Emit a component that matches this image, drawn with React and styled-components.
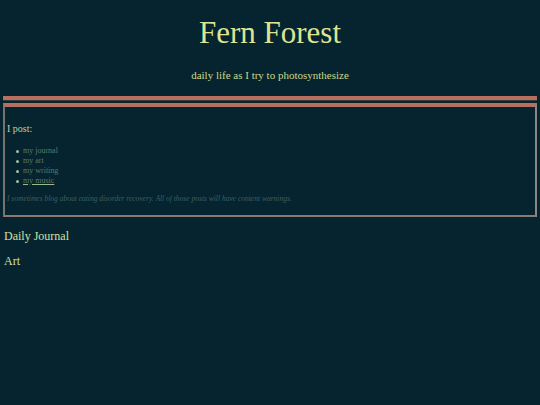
import React from "react";
import styled, { createGlobalStyle } from "styled-components";

const Global = createGlobalStyle`
body {
  margin: 0;
  padding: 0 3px;
  background: #06242f;
  font-family: "Liberation Serif", "DejaVu Serif", serif;
}
`

const Header = styled.header`
text-align: center;
padding-top: 11px;
`
const Title = styled.h1`
margin: 0;
font-size: 31px;
line-height: 44px;
font-weight: normal;
color: #dde592;
`
const Subtitle = styled.p`
margin: 12px 0 0;
font-size: 11px;
line-height: 16px;
color: #cbd98c;
`
const Bar = styled.div`
height: 4px;
margin-top: ${(p) => p.top}px;
background: #b7705f;
border-bottom: 1px solid #3b3a38;
`
const Box = styled.section`
margin-top: 2px;
border-top: 4px solid #b7705f;
border-left: 2px solid #77726d;
border-right: 2px solid #8c8782;
border-bottom: 2px solid #8c7a72;
padding: 15px 2px 9px;
`
const Lead = styled.p`
margin: 0;
font-size: 10px;
line-height: 14px;
color: #bcd3a2;
`
const List = styled.ul`
margin: 10px 0 6px;
padding-left: 9px;
list-style: none;
font-size: 8px;
line-height: 10px;
color: #587c68;
`
const Item = styled.li`
display: flex;
align-items: center;
gap: 4px;
&::before {
  content: "";
  width: 3px;
  height: 3px;
  border-radius: 50%;
  background: #9cc4a0;
}
span {
  text-decoration: ${(p) => (p.under ? "underline" : "none")};
  text-decoration-color: #9bb98e;
}
`
const Note = styled.p`
margin: 0;
font-size: 7.5px;
line-height: 14px;
font-style: italic;
color: #3c5f5f;
`
const Section = styled.h2`
margin: ${(p) => p.top}px 0 0 1px;
font-size: 12px;
line-height: 18px;
font-weight: normal;
color: #cfe0a4;
`

export default function App() {
  return (
    <>
      <Global />
      <Header>
        <Title>Fern Forest</Title>
        <Subtitle>daily life as I try to photosynthesize</Subtitle>
      </Header>
      <Bar top={13} />
      <Box>
        <Lead>I post:</Lead>
        <List>
          <Item><span>my journal</span></Item>
          <Item><span>my art</span></Item>
          <Item><span>my writing</span></Item>
          <Item under><span>my music</span></Item>
        </List>
        <Note>I sometimes blog about eating disorder recovery. All of those posts will have content warnings.</Note>
      </Box>
      <Section top={10}>Daily Journal</Section>
      <Section top={7}>Art</Section>
    </>
  );
}
